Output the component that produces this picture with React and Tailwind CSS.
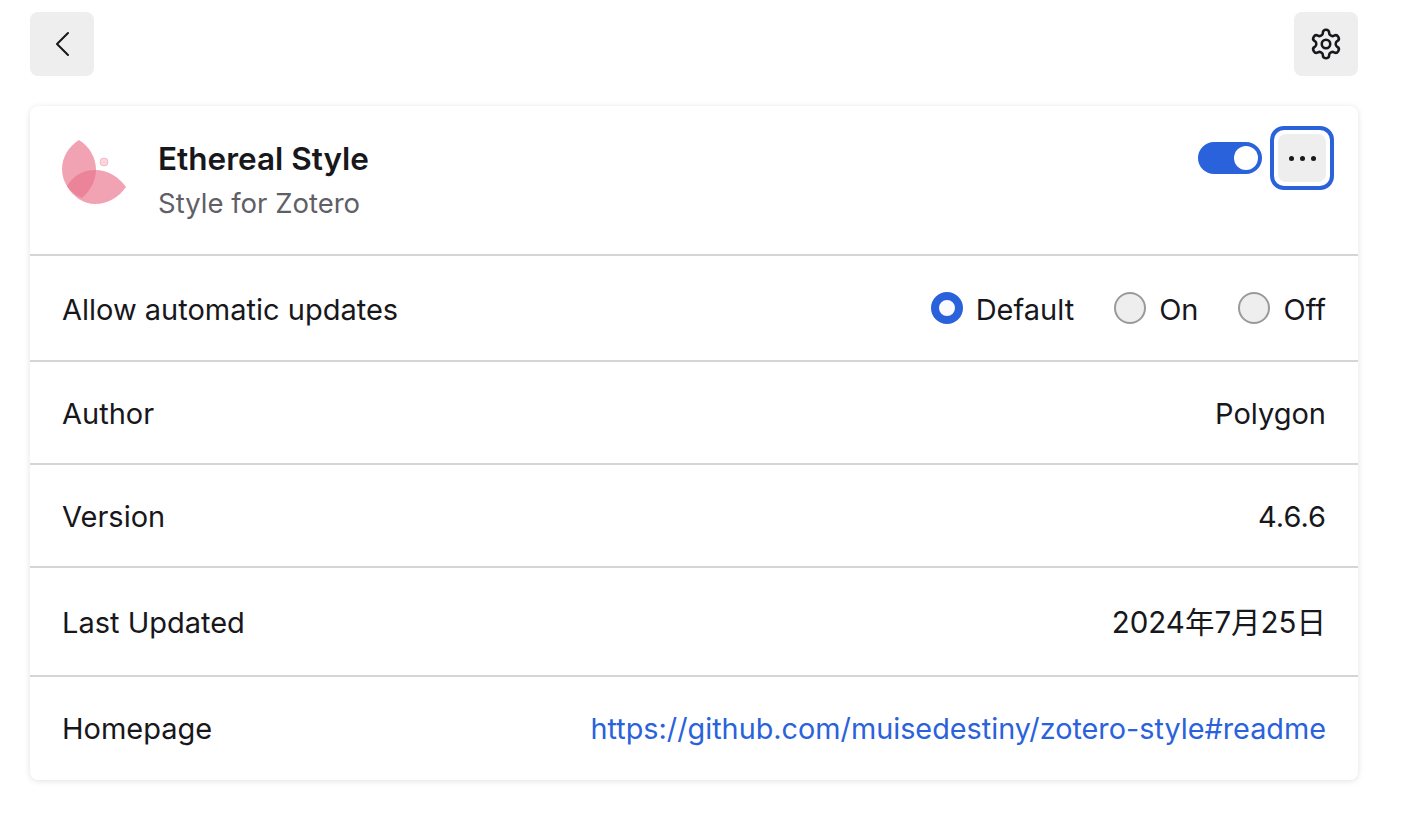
import React from "react";

const Row = ({ label, children, className }) => (
  <div className={"flex items-center justify-between border-b-2 border-[#d6d4d9] pl-8 pr-8 " + className}>
    <span>{label}</span>
    {children}
  </div>
);

const Radio = ({ label, checked }) => (
  <label className="flex items-center gap-[13px]">
    {checked ? (
      <span className="mb-1 h-8 w-8 rounded-full border-8 border-[#2a62dc] bg-[#fafaff]" />
    ) : (
      <span className="mb-1 h-8 w-8 rounded-full border-2 border-[#9a9a9a] bg-[#eeeeee]" />
    )}
    <span>{label}</span>
  </label>
);

const Logo = () => (
  <svg width="64" height="64" viewBox="0 0 64 64" className="shrink-0">
    <path d="M17 0C27 6 34 17 34 30C34 41 28 51 20 58C8 54 0 42 0 29C0 17 7 6 17 0Z" fill="#e9738c" fillOpacity="0.66" />
    <path d="M5 46C11 36 21 30 33 30C46 30 57 37 64 47C57 57 46 64 33 64C22 64 11 57 5 46Z" fill="#e9738c" fillOpacity="0.66" />
    <circle cx="42" cy="22" r="4" fill="#f9d5dc" stroke="#f4bcc8" strokeWidth="1" />
  </svg>
);

const App = () => {
  return (
    <div className="h-[822px] bg-white pl-[30px] pr-[60px] pt-3 text-[29px] text-[#17171c] font-['Inter',sans-serif]">
      <div className="flex items-center justify-between">
        <button className="flex h-16 w-16 items-center justify-center rounded-lg bg-[#eeeeee]">
          <svg width="32" height="32" viewBox="0 0 32 32" fill="none" stroke="#17171c" strokeWidth="2" strokeLinecap="round" strokeLinejoin="round">
            <path d="M22 5L11 16l11 11" />
          </svg>
        </button>
        <button className="flex h-16 w-16 items-center justify-center rounded-lg bg-[#eeeeee]">
          <svg width="34" height="34" viewBox="0 0 24 24" fill="none" stroke="#17171c" strokeWidth="1.800" strokeLinecap="round" strokeLinejoin="round">
            <path d="M12.220 2h-.440a2 2 0 0 0-2 2v.180a2 2 0 0 1-1 1.730l-.430.250a2 2 0 0 1-2 0l-.150-.080a2 2 0 0 0-2.730.730l-.220.380a2 2 0 0 0 .730 2.730l.150.100a2 2 0 0 1 1 1.720v.510a2 2 0 0 1-1 1.740l-.150.090a2 2 0 0 0-.730 2.730l.220.380a2 2 0 0 0 2.730.730l.150-.080a2 2 0 0 1 2 0l.430.250a2 2 0 0 1 1 1.730V20a2 2 0 0 0 2 2h.440a2 2 0 0 0 2-2v-.180a2 2 0 0 1 1-1.730l.430-.250a2 2 0 0 1 2 0l.150.080a2 2 0 0 0 2.730-.730l.220-.390a2 2 0 0 0-.730-2.730l-.150-.080a2 2 0 0 1-1-1.740v-.500a2 2 0 0 1 1-1.740l.150-.090a2 2 0 0 0 .730-2.730l-.220-.380a2 2 0 0 0-2.730-.730l-.150.080a2 2 0 0 1-2 0l-.430-.250a2 2 0 0 1-1-1.730V4a2 2 0 0 0-2-2z" />
            <circle cx="12" cy="12" r="3" />
          </svg>
        </button>
      </div>

      <div className="mt-[30px] rounded-lg bg-white shadow-[0_1px_6px_rgba(0,0,0,0.12)]">
        <div className="flex h-[150px] items-start justify-between border-b-2 border-[#d6d4d9] pl-8 pr-6 pt-5">
          <div className="flex items-start gap-8 pt-[14px]">
            <Logo />
            <div className="-mt-[3px]">
              <div className="text-[31.500px] font-semibold leading-[44px]">Ethereal Style</div>
              <div className="text-[27.500px] leading-[44px] text-[#5f5f66]">Style for Zotero</div>
            </div>
          </div>
          <div className="flex items-center gap-2">
            <span className="flex h-8 w-16 items-center justify-end rounded-full bg-[#2a62dc] pr-1">
              <span className="h-6 w-6 rounded-full bg-white" />
            </span>
            <button className="flex h-16 w-16 items-center justify-center rounded-[14px] border-4 border-[#2a62dc] bg-white p-1">
              <span className="flex h-full w-full items-center justify-center gap-[6px] rounded-lg bg-[#eeeeee]">
                <span className="h-[5px] w-[5px] rounded-full bg-[#17171c]" />
                <span className="h-[5px] w-[5px] rounded-full bg-[#17171c]" />
                <span className="h-[5px] w-[5px] rounded-full bg-[#17171c]" />
              </span>
            </button>
          </div>
        </div>
        <Row label="Allow automatic updates" className="h-[106px] pt-1">
          <div className="flex items-center gap-10">
            <Radio label="Default" checked />
            <Radio label="On" />
            <Radio label="Off" />
          </div>
        </Row>
        <Row label="Author" className="h-[103px] pt-[2px]">
          <span>Polygon</span>
        </Row>
        <Row label="Version" className="h-[103px] pt-[2px]">
          <span>4.6.6</span>
        </Row>
        <Row label="Last Updated" className="h-[109px] pt-[2px]">
          <span className="text-[29.500px] font-['Inter','Noto_Sans_CJK_SC',sans-serif]">2024年7月25日</span>
        </Row>
        <div className="flex h-[103px] items-center justify-between pl-8 pr-8">
          <span>Homepage</span>
          <a className="text-[28.800px] text-[#2a62dc]">https://github.com/muisedestiny/zotero-style#readme</a>
        </div>
      </div>
    </div>
  );
};

export default App;
